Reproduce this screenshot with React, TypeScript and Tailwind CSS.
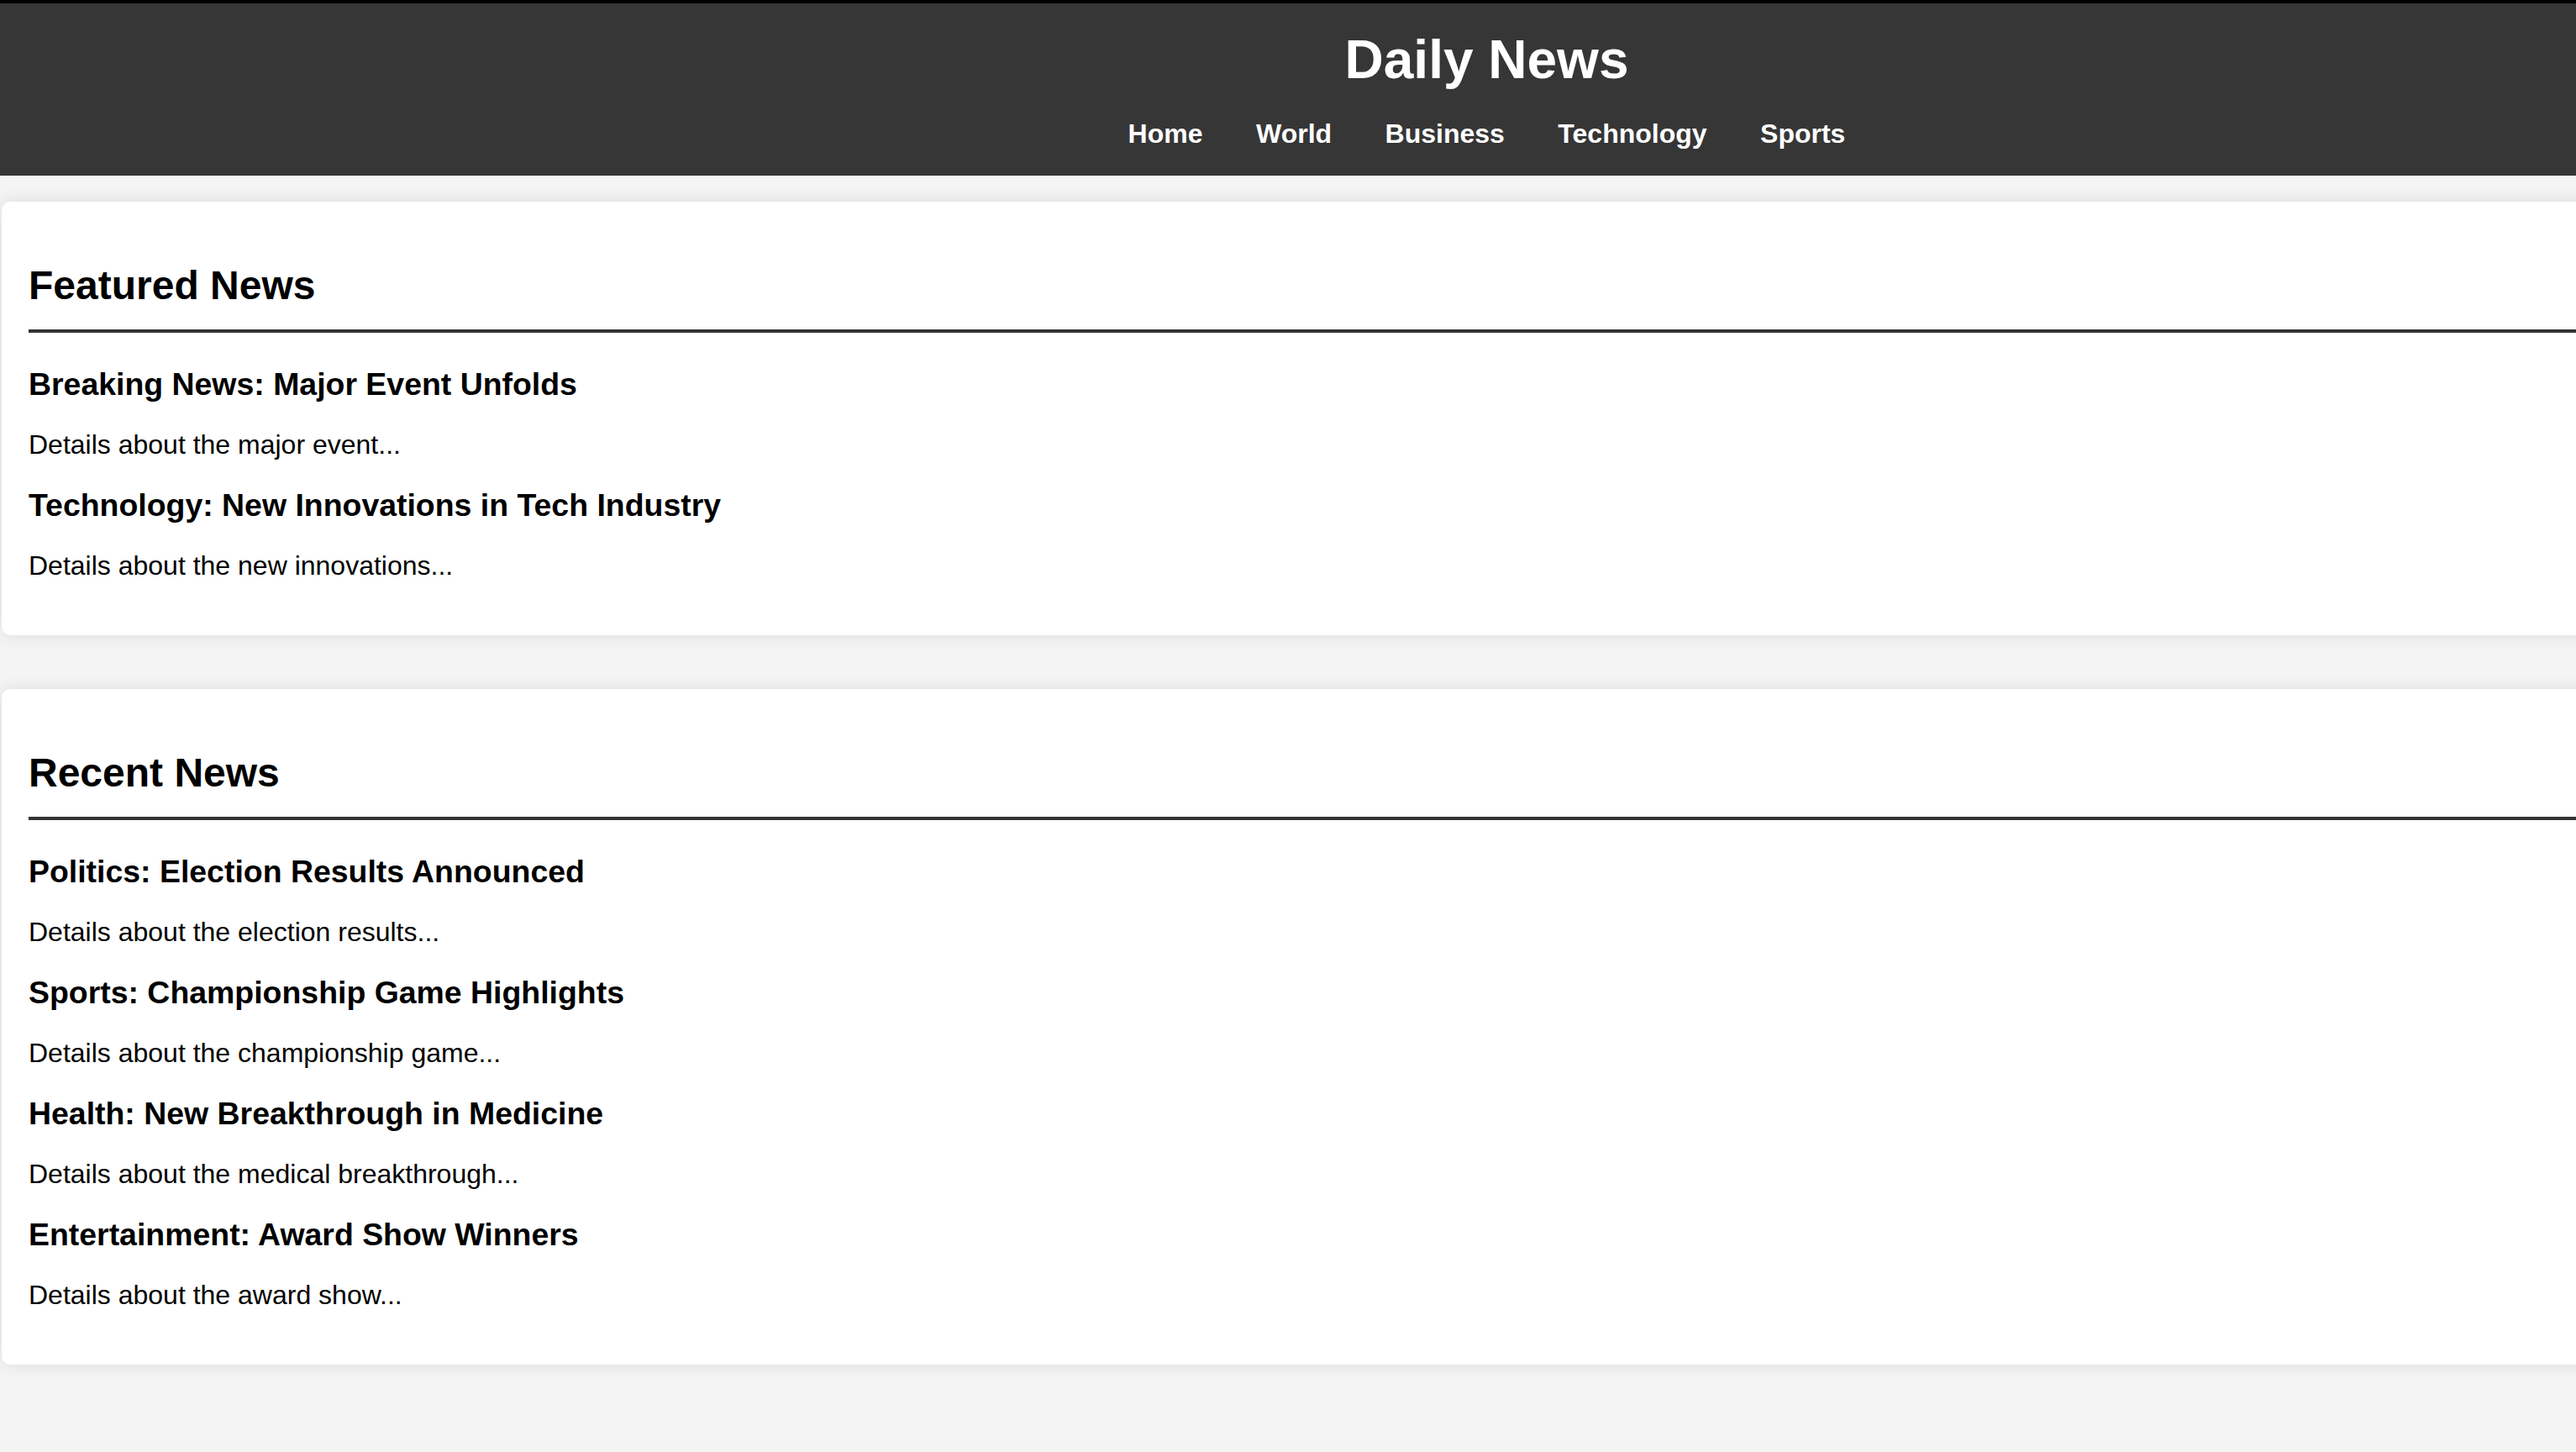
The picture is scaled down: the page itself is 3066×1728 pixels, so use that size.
const navLinks = ['Home', 'World', 'Business', 'Technology', 'Sports']

const featured = [
  { title: 'Breaking News: Major Event Unfolds', body: 'Details about the major event...' },
  { title: 'Technology: New Innovations in Tech Industry', body: 'Details about the new innovations...' },
]

const recent = [
  { title: 'Politics: Election Results Announced', body: 'Details about the election results...' },
  { title: 'Sports: Championship Game Highlights', body: 'Details about the championship game...' },
  { title: 'Health: New Breakthrough in Medicine', body: 'Details about the medical breakthrough...' },
  { title: 'Entertainment: Award Show Winners', body: 'Details about the award show...' },
]

function NewsSection({ heading, items }: { heading: string; items: { title: string; body: string }[] }) {
  return (
    <section className="rounded-[10px] bg-white p-[32px] shadow-[0_0_20px_rgba(0,0,0,0.1)]">
      <h2 className="mt-[40px] mb-[40px] border-b-4 border-[#333] pb-[25px] text-[48px] font-bold leading-[55px]">
        {heading}
      </h2>
      <div className="mb-[32px] flex flex-col gap-[32px]">
        {items.map((item) => (
          <article key={item.title} className="flex flex-col gap-[32px]">
            <h3 className="text-[37.44px] font-bold leading-[43px]">{item.title}</h3>
            <p className="text-[32px] leading-[37px]">{item.body}</p>
          </article>
        ))}
      </div>
    </section>
  )
}

export default function App() {
  return (
    <div className="min-h-screen w-full overflow-hidden bg-[#f4f4f4] font-['Liberation_Sans',Arial,sans-serif] text-black">
      <div className="w-[3539px]">
        {/* Header */}
        <header className="border-t-4 border-black bg-[#363636] pt-[31px] pb-[31px] text-center text-white">
          <h1 className="mb-[33px] text-[64px] font-bold leading-[73px]">Daily News</h1>
          <nav className="flex justify-center gap-[63.5px] text-[32px] font-bold leading-[37px]">
            {navLinks.map((link) => (
              <a key={link} href="#" className="text-white no-underline">
                {link}
              </a>
            ))}
          </nav>
        </header>

        {/* Content */}
        <main className="flex flex-col gap-[64px] pt-[31px] pl-[2px]">
          <NewsSection heading="Featured News" items={featured} />
          <NewsSection heading="Recent News" items={recent} />
        </main>
      </div>
    </div>
  )
}
